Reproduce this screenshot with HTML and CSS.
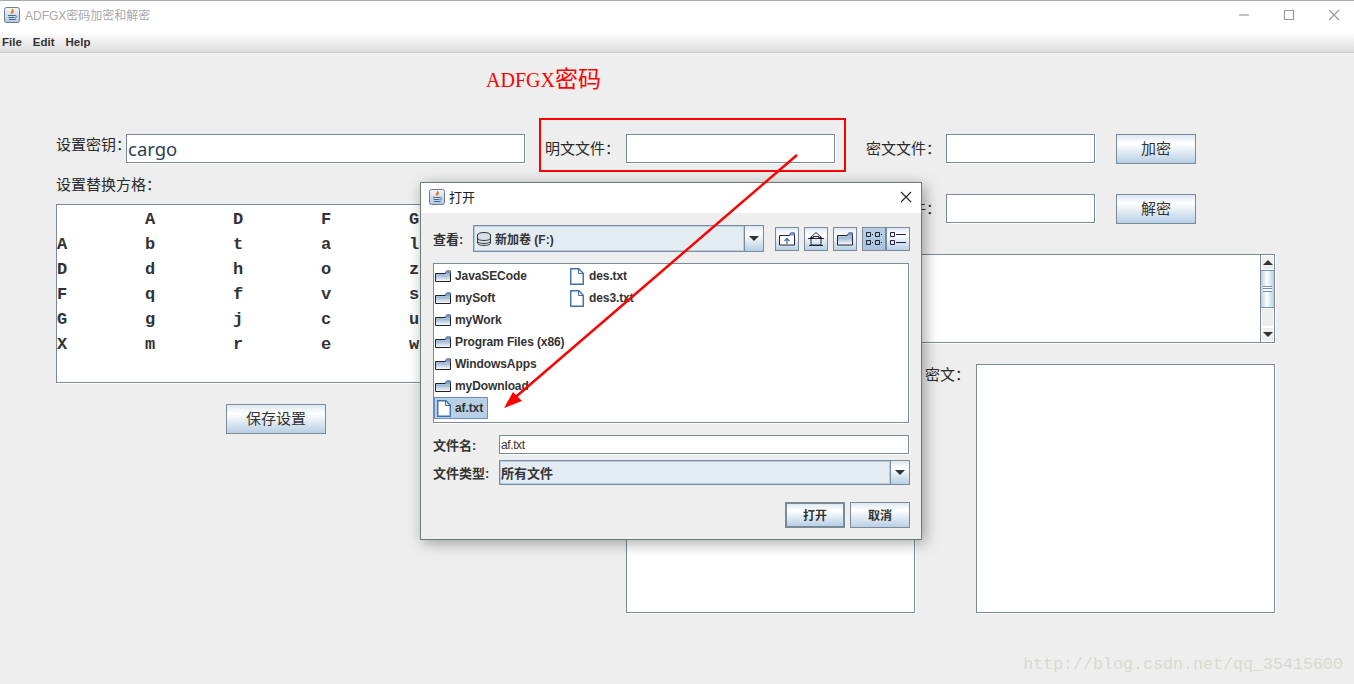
FILE: index.html
```html
<!DOCTYPE html>
<html lang="zh">
 <head>
  <meta charset="UTF-8" />
  <meta name="viewport" content="width=device-width, initial-scale=1.0" />
  <title>ADFGX密码加密和解密</title>
  <link rel="stylesheet" href="styles.css">
 </head>
 <body>
  <svg class="sprites" width="0" height="0">
   <defs>
    <linearGradient id="java-bg" x1="0" y1="0" x2="0" y2="1">
     <stop offset="0" stop-color="#f4f7fa" />
     <stop offset="1" stop-color="#b4c6d8" />
    </linearGradient>
    <linearGradient id="folder-bg" x1="0" y1="0" x2="0" y2="1">
     <stop offset="0" stop-color="#dfe8f2" />
     <stop offset="0.4" stop-color="#9db8d6" />
     <stop offset="1" stop-color="#fff" />
    </linearGradient>
    <symbol id="java" viewBox="0 0 16 16">
     <rect x="0.5" y="0.5" width="15" height="15" rx="2" fill="url(#java-bg)" stroke="#6c7f92" />
     <path d="M8.5 2c1 1.5-2 2.500-1 4.500M10 3.500c-1.500 1-2 2-1 3" fill="none" stroke="#e8731a" stroke-width="1.200" />
     <path d="M4 8.500h7M4.500 10.500h6M5 12.500h6.500M11 8.500c2 0 2 2 0 2.500" fill="none" stroke="#3f6d9c" />
    </symbol>
    <symbol id="folder" viewBox="0 0 16 12">
     <path d="M0.500 3.500h10l1-2.500h4v10.500h-15z" fill="url(#folder-bg)" stroke="#222" />
     <path d="M11 1h4.500v2.500h-5z" fill="#6f8fd0" />
    </symbol>
    <symbol id="file" viewBox="0 0 14 17">
     <path d="M0.750 0.750h8l4.500 4.500v11h-12.500z" fill="#fff" stroke="#3f6ea8" stroke-width="1.400" />
     <path d="M8.500 1v4.500h4.500" fill="none" stroke="#3f6ea8" />
    </symbol>
    <symbol id="drive" viewBox="0 0 14 14">
     <ellipse cx="7" cy="3" rx="6.500" ry="2.500" fill="#d5deea" stroke="#333" />
     <path d="M0.500 3v8c0 1.500 3 2.500 6.500 2.500s6.500-1 6.500-2.500v-8" fill="#d5deea" stroke="#333" />
     <path d="M0.500 6c0 1.500 3 2.500 6.500 2.500s6.500-1 6.500-2.500M0.500 9c0 1.500 3 2.500 6.500 2.500s6.500-1 6.500-2.500" fill="none" stroke="#333" />
    </symbol>
   </defs>
  </svg>

  <div class="app">
   <header class="titlebar">
    <svg class="java-icon"><use href="#java" /></svg>
    <span class="app-title">ADFGX密码加密和解密</span>
    <div class="win-controls">
     <svg class="win-btn" viewBox="0 0 12 12"><path d="M1 6h10" /></svg>
     <svg class="win-btn" viewBox="0 0 12 12"><path d="M1.500 1.500h9v9h-9z" /></svg>
     <svg class="win-btn" viewBox="0 0 12 12"><path d="M1 1l10 10M11 1l-10 10" /></svg>
    </div>
   </header>

   <nav class="menubar">
    <span>File</span>
    <span>Edit</span>
    <span>Help</span>
   </nav>

   <main class="content">
    <h1 class="heading">ADFGX<span class="heading-cjk">密码</span></h1>

    <div class="form">
     <section class="left">
      <div class="key-row">
       <span class="label">设置密钥：</span>
       <div class="field key-field">cargo</div>
      </div>
      <div class="label grid-label">设置替换方格：</div>
      <div class="field square">
       <span></span><b>A</b><b>D</b><b>F</b><b>G</b>
       <b>A</b><b>b</b><b>t</b><b>a</b><b>l</b>
       <b>D</b><b>d</b><b>h</b><b>o</b><b>z</b>
       <b>F</b><b>q</b><b>f</b><b>v</b><b>s</b>
       <b>G</b><b>g</b><b>j</b><b>c</b><b>u</b>
       <b>X</b><b>m</b><b>r</b><b>e</b><b>w</b>
      </div>
      <button class="btn save-btn">保存设置</button>
     </section>

     <section class="right">
      <div class="file-row">
       <span class="label file-label">明文文件：</span>
       <div class="field plain-file"></div>
       <span class="label out-label">密文文件：</span>
       <div class="field out-file"></div>
       <button class="btn action-btn">加密</button>
      </div>
      <div class="file-row">
       <span class="label file-label">密文文件：</span>
       <div class="field plain-file"></div>
       <span class="label out-label">明文文件：</span>
       <div class="field out-file"></div>
       <button class="btn action-btn">解密</button>
      </div>
      <div class="field log-box">
       <div class="scrollbar">
        <div class="sb-btn"><i class="tri up"></i></div>
        <div class="sb-thumb"><i></i></div>
        <div class="sb-track"></div>
        <div class="sb-btn"><i class="tri"></i></div>
       </div>
      </div>
      <div class="text-row">
       <div class="field plain-text"></div>
       <span class="label cipher-label">密文：</span>
       <div class="field cipher-text"></div>
      </div>
     </section>
    </div>
   </main>

   <!-- file chooser window -->
   <div class="dialog">
    <div class="dlg-title">
     <svg class="java-icon"><use href="#java" /></svg>
     <span>打开</span>
     <svg class="dlg-close" viewBox="0 0 12 12"><path d="M1 1l10 10M11 1l-10 10" /></svg>
    </div>
    <div class="dlg-body">
     <div class="look-row">
      <span class="dlg-label look-label">查看:</span>
      <div class="combo look-combo">
       <div class="combo-value"><svg class="drive-icon"><use href="#drive" /></svg>新加卷 (F:)</div>
       <div class="combo-arrow"><i class="tri"></i></div>
      </div>
      <div class="tools">
       <button class="tool">
        <svg viewBox="0 0 18 16"><path d="M1.500 4.500h10l1-2.500h4v12h-15z" fill="#fff" stroke="#223" /><path d="M12.500 2h4v2.500h-5z" fill="#6f8fd0" /><path d="M9 13v-5M6.500 10l2.500-2.500 2.500 2.500" fill="none" stroke="#3f6ea8" stroke-width="1.300" /></svg>
       </button>
       <button class="tool">
        <svg viewBox="0 0 18 16"><path d="M3.500 6.500l5.500-5 5.500 5h-3v-1h-5v1zM1 7.500h16" fill="#fff" stroke="#223" /><path d="M4 8v6h10v-6M2 14.500h14" fill="none" stroke="#223" /></svg>
       </button>
       <button class="tool">
        <svg viewBox="0 0 18 16"><path d="M1.500 4.500h10l1-2.500h4v12h-15z" fill="url(#folder-bg)" stroke="#223" /><path d="M12.500 2h4v2.500h-5z" fill="#6f8fd0" /></svg>
       </button>
       <div class="view-tools">
        <button class="tool tool-on">
         <svg viewBox="0 0 18 16"><path d="M1.500 1.500h4v4h-4zM10.500 1.500h4v4h-4zM1.500 9.500h4v4h-4zM10.500 9.500h4v4h-4z" fill="none" stroke="#223" /><path d="M7 3.500h1M16 3.500h1M7 11.500h1M16 11.500h1" stroke="#223" /></svg>
        </button>
        <button class="tool">
         <svg viewBox="0 0 18 16"><path d="M1.500 1.500h4v4h-4zM1.500 9.500h4v4h-4z" fill="none" stroke="#223" /><path d="M7 3.500h10M7 11.500h10" stroke="#223" /></svg>
        </button>
       </div>
      </div>
     </div>

     <div class="field file-list">
      <div class="file-item"><svg class="folder-icon"><use href="#folder" /></svg>JavaSECode</div>
      <div class="file-item"><svg class="folder-icon"><use href="#folder" /></svg>mySoft</div>
      <div class="file-item"><svg class="folder-icon"><use href="#folder" /></svg>myWork</div>
      <div class="file-item"><svg class="folder-icon"><use href="#folder" /></svg>Program Files (x86)</div>
      <div class="file-item"><svg class="folder-icon"><use href="#folder" /></svg>WindowsApps</div>
      <div class="file-item"><svg class="folder-icon"><use href="#folder" /></svg>myDownload</div>
      <div class="file-item selected"><svg class="file-icon"><use href="#file" /></svg>af.txt</div>
      <div class="file-item"><svg class="file-icon"><use href="#file" /></svg>des.txt</div>
      <div class="file-item"><svg class="file-icon"><use href="#file" /></svg>des3.txt</div>
     </div>

     <div class="name-row">
      <span class="dlg-label name-label">文件名:</span>
      <div class="field name-field">af.txt</div>
     </div>
     <div class="type-row">
      <span class="dlg-label name-label">文件类型:</span>
      <div class="combo type-combo">
       <div class="combo-value">所有文件</div>
       <div class="combo-arrow"><i class="tri"></i></div>
      </div>
     </div>
     <div class="dlg-actions">
      <button class="btn dlg-btn default-btn">打开</button>
      <button class="btn dlg-btn">取消</button>
     </div>
    </div>
   </div>

   <!-- annotations drawn on top of the screenshot -->
   <div class="highlight"></div>
   <svg class="arrow" viewBox="0 0 1354 684">
    <path d="M797 155L511 401" fill="none" stroke="#f00" stroke-width="2.500" />
    <path d="M504 408L513 392L522 401z" fill="#f00" />
   </svg>
   <div class="watermark">http://blog.csdn.net/qq_35415600</div>
  </div>
 </body>
</html>
```

FILE: styles.css
```css
* {
 box-sizing: border-box;
}

body {
 margin: 0;
 background-color: #eeeeee;
 font-family: "Liberation Sans", "Noto Sans CJK SC", sans-serif;
 color: #333;
}

.sprites {
 position: absolute;
}

.app {
 position: relative;
 width: 1354px;
 height: 684px;
 overflow: hidden;
 display: flex;
 flex-direction: column;
}

/* window frame */
.titlebar {
 height: 32px;
 flex: none;
 display: flex;
 align-items: center;
 padding: 0 0 4px 4px;
 background: #fff;
 border-top: 1px solid #aaa;
}

.java-icon {
 width: 16px;
 height: 16px;
 flex: none;
}

.app-title {
 margin-left: 5px;
 font-size: 12px;
 color: #a8a8a8;
}

.win-controls {
 margin-left: auto;
 display: flex;
 gap: 33px;
 padding-right: 14px;
}

.win-btn {
 width: 12px;
 height: 12px;
 fill: none;
 stroke: #999;
 stroke-width: 1.200;
}

.menubar {
 height: 21px;
 flex: none;
 display: flex;
 align-items: center;
 gap: 11px;
 padding-left: 2px;
 font-size: 11.500px;
 font-weight: bold;
 background: linear-gradient(#fff, #dcdcdc);
 border-bottom: 1px solid #ccc;
}

.content {
 flex: 1;
 padding-left: 56px;
}

.heading {
 margin: 14px 0 0 430px;
 height: 25px;
 font-family: "Liberation Serif", "Noto Sans CJK SC", serif;
 font-size: 20px;
 line-height: 25px;
 font-weight: normal;
 color: #f00;
}

.heading-cjk {
 font-size: 23px;
}

.form {
 display: flex;
 margin-top: 42px;
}

.label {
 font-family: "Noto Sans CJK TC", sans-serif;
 font-size: 15px;
 color: #2a2a2a;
}

.field {
 background: #fff;
 border: 1px solid #7a8a99;
 box-shadow: 1px 1px 0 #fff;
}

.btn {
 height: 30px;
 padding: 0 0 3px;
 font-family: inherit;
 font-size: 15px;
 color: #333;
 border: 1px solid #7a8a99;
 background: linear-gradient(#dde8f3, #fff 30%, #b8cfe5);
}

/* left column */
.left {
 width: 489px;
 flex: none;
}

.key-row {
 display: flex;
 height: 29px;
}

.key-row .label {
 width: 70px;
 line-height: 19px;
 white-space: nowrap;
}

.key-field {
 width: 399px;
 font-family: "Noto Sans", sans-serif;
 font-size: 18.500px;
 line-height: 27px;
 padding-left: 1px;
 color: #2f3f50;
}

.grid-label {
 margin-top: 11px;
 height: 30px;
 line-height: 20px;
}

.square {
 width: 440px;
 height: 179px;
 display: grid;
 grid-template-columns: repeat(5, 88px);
 grid-auto-rows: 25px;
 padding-top: 2px;
 font-family: "Liberation Mono", monospace;
 font-size: 17px;
 line-height: 25px;
}

.save-btn {
 display: block;
 width: 100px;
 margin: 21px 0 0 170px;
}

/* right column */
.file-row {
 display: flex;
 height: 30px;
 margin-bottom: 30px;
}

.file-row .label {
 line-height: 28px;
 white-space: nowrap;
}

.file-label {
 width: 81px;
}

.plain-file {
 width: 209px;
 height: 29px;
}

.out-label {
 width: 80px;
 margin-left: 31px;
}

.out-file {
 width: 149px;
 height: 29px;
}

.action-btn {
 width: 80px;
 margin-left: 21px;
}

.log-box {
 width: 649px;
 height: 89px;
 margin-left: 81px;
 display: flex;
 justify-content: flex-end;
}

.scrollbar {
 width: 14px;
 display: flex;
 flex-direction: column;
 border-left: 1px solid #7a8a99;
}

.sb-btn {
 height: 15px;
 display: flex;
 align-items: center;
 justify-content: center;
 background: #eee;
 border: 1px solid #fff;
}

.sb-thumb {
 height: 38px;
 display: flex;
 align-items: center;
 justify-content: center;
 border-top: 1px solid #6d8fc9;
 border-bottom: 1px solid #6d8fc9;
 background: linear-gradient(90deg, #b8cfe5, #fff 45%, #b8cfe5);
}

.sb-thumb i {
 width: 9px;
 height: 6px;
 border-top: 1px solid #6d8fc9;
 border-bottom: 1px solid #6d8fc9;
 background: linear-gradient(#fff 1px, #6d8fc9 1px, #6d8fc9 2px, #fff 2px);
}

.sb-track {
 flex: 1;
 background: #eee;
 border: 1px solid #fff;
}

.tri {
 width: 0;
 height: 0;
 border-left: 5px solid transparent;
 border-right: 5px solid transparent;
 border-top: 5px solid #333;
}

.tri.up {
 border-top: none;
 border-bottom: 5px solid #333;
}

.text-row {
 display: flex;
 margin: 21px 0 0 81px;
}

.plain-text {
 width: 289px;
 height: 249px;
}

.cipher-label {
 width: 51px;
 margin-left: 10px;
 line-height: 20px;
 white-space: nowrap;
}

.cipher-text {
 width: 299px;
 height: 249px;
}

/* file chooser, a second window over the first */
.dialog {
 position: absolute;
 left: 420px;
 top: 182px;
 width: 502px;
 height: 358px;
 background: #eeeeee;
 border: 1px solid #6e7d72;
 box-shadow: 3px 3px 14px rgba(0, 0, 0, 0.35);
}

.dlg-title {
 height: 30px;
 display: flex;
 align-items: center;
 padding: 0 9px 3px 8px;
 background: #fff;
 font-size: 13px;
 color: #222;
}

.dlg-title span {
 margin-left: 4px;
}

.dlg-close {
 width: 12px;
 height: 12px;
 margin-left: auto;
 fill: none;
 stroke: #222;
 stroke-width: 1.100;
}

.dlg-body {
 padding: 12px 11px 0 12px;
}

.dlg-label {
 font-size: 13px;
 font-weight: bold;
}

.look-row {
 display: flex;
 align-items: center;
 height: 27px;
}

.look-label {
 width: 40px;
}

.combo {
 display: flex;
 border: 1px solid #7a8a99;
 font-size: 12px;
 font-weight: bold;
}

.combo-value {
 flex: 1;
 display: flex;
 align-items: center;
 gap: 4px;
 background: #e3ebf3;
 border: 1px solid #b8cfe5;
}

.combo-arrow {
 width: 19px;
 display: flex;
 align-items: center;
 justify-content: center;
 border-left: 1px solid #7a8a99;
 background: linear-gradient(#dde8f3, #fff 30%, #b8cfe5);
}

.look-combo {
 width: 291px;
 height: 27px;
}

.look-combo .combo-value {
 padding-left: 2px;
}

.drive-icon {
 width: 14px;
 height: 14px;
}

.tools {
 display: flex;
 gap: 5px;
 margin-left: 11px;
}

.view-tools {
 display: flex;
}

.tool {
 width: 24px;
 height: 24px;
 padding: 3px 2px;
 border: 1px solid #7a8a99;
 background: linear-gradient(#dde8f3, #fff 30%, #b8cfe5);
}

.tool svg {
 display: block;
 width: 18px;
 height: 16px;
}

.tool-on {
 background: linear-gradient(#b8cfe5, #a9c3de);
}

.file-list {
 margin-top: 11px;
 width: 476px;
 height: 160px;
 padding: 1px;
 display: grid;
 grid-template-rows: repeat(7, 22px);
 grid-template-columns: 133px 150px;
 grid-auto-flow: column;
 font-size: 12px;
 font-weight: bold;
 letter-spacing: -0.100px;
}

.file-item {
 display: flex;
 align-items: center;
 gap: 4px;
 justify-self: start;
 padding-right: 5px;
 white-space: nowrap;
}

.file-item.selected {
 margin-left: -1px;
 padding-right: 4px;
 background: #b8cfe5;
 border: 1px solid #6d8fc9;
}

.folder-icon {
 width: 16px;
 height: 12px;
}

.file-icon {
 width: 14px;
 height: 17px;
 margin: 0 1px 0 2px;
}

.selected .file-icon {
 margin-right: 0;
}

.name-row {
 display: flex;
 align-items: center;
 margin-top: 12px;
 height: 19px;
}

.name-label {
 width: 66px;
 white-space: nowrap;
}

.name-field {
 width: 410px;
 height: 19px;
 padding-left: 1px;
 font-size: 12px;
 line-height: 19px;
 letter-spacing: -0.400px;
}

.type-row {
 display: flex;
 align-items: center;
 margin-top: 6px;
 height: 25px;
}

.type-combo {
 width: 411px;
 height: 25px;
}

.type-combo .combo-value {
 font-size: 13px;
}

.dlg-actions {
 display: flex;
 justify-content: flex-end;
 gap: 5px;
 margin-top: 17px;
}

.dlg-btn {
 width: 60px;
 height: 26px;
 padding: 0 0 1px;
 font-size: 12px;
 font-weight: bold;
}

.default-btn {
 border: 2px solid #7a8a99;
}

/* red markup */
.highlight {
 position: absolute;
 left: 539px;
 top: 118px;
 width: 307px;
 height: 54px;
 border: 2px solid #f00;
}

.arrow {
 position: absolute;
 left: 0;
 top: 0;
 width: 1354px;
 height: 684px;
 pointer-events: none;
}

.watermark {
 position: absolute;
 right: 11px;
 top: 654px;
 font-family: "Liberation Mono", monospace;
 font-size: 16.670px;
 line-height: 22px;
 color: #d8d8d2;
}
```
